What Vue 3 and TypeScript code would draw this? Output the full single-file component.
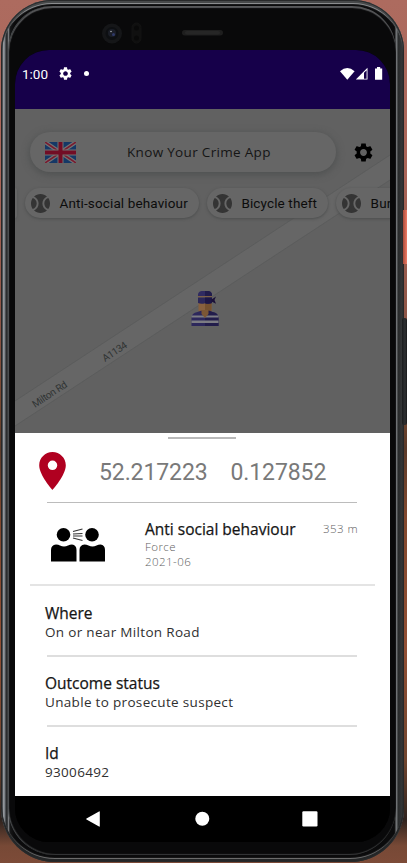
<script setup lang="ts">
interface Detail {
  title: string
  value: string
}

const chips: string[] = ['Anti-social behaviour', 'Bicycle theft', 'Burglary']
const details: Detail[] = [
  { title: 'Where', value: 'On or near Milton Road' },
  { title: 'Outcome status', value: 'Unable to prosecute suspect' },
  { title: 'Id', value: '93006492' },
]
const gearPath =
  'M19.14 12.94c.04-.3.06-.61.06-.94 0-.32-.02-.64-.07-.94l2.03-1.58c.18-.14.23-.41.12-.61l-1.92-3.32c-.12-.22-.37-.29-.59-.22l-2.39.96c-.5-.38-1.03-.7-1.62-.94l-.36-2.54c-.04-.24-.24-.41-.48-.41h-3.84c-.24 0-.43.17-.47.41l-.36 2.54c-.59.24-1.13.57-1.62.94l-2.39-.96c-.22-.08-.47 0-.59.22L2.74 8.87c-.12.21-.08.47.12.61l2.03 1.58c-.05.3-.09.63-.09.94s.02.64.07.94l-2.03 1.58c-.18.14-.23.41-.12.61l1.92 3.32c.12.22.37.29.59.22l2.39-.96c.5.38 1.03.7 1.62.94l.36 2.54c.05.24.24.41.48.41h3.84c.24 0 .44-.17.47-.41l.36-2.54c.59-.24 1.13-.56 1.62-.94l2.39.96c.22.08.47 0 .59-.22l1.92-3.32c.12-.22.07-.47-.12-.61l-2.01-1.58zM12 15.6c-1.98 0-3.6-1.62-3.6-3.6s1.62-3.6 3.6-3.6 3.6 1.62 3.6 3.6-1.62 3.6-3.6 3.6z'
const ballPath =
  'M3.81 6.28C2.67 7.9 2 9.87 2 12s.67 4.1 1.81 5.72C6.23 16.95 8 14.68 8 12S6.23 7.05 3.81 6.28zM20.19 6.28C17.77 7.05 16 9.32 16 12s1.77 4.95 4.19 5.72C21.33 16.1 22 14.13 22 12s-.67-4.1-1.81-5.72zM14 12c0-3.28 1.97-6.09 4.79-7.33C17.01 3.02 14.63 2 12 2S6.99 3.02 5.21 4.67C8.03 5.91 10 8.72 10 12s-1.97 6.09-4.79 7.33C6.99 20.98 9.37 22 12 22s5.01-1.02 6.79-2.67C15.97 18.09 14 15.28 14 12z'
</script>

<template>
  <div class="desktop">
    <span class="side-key power"></span>
    <span class="side-key volume"></span>
    <div class="phone">
      <div class="bezel">
        <svg class="hardware" viewBox="0 0 407 50" width="407" height="50">
          <circle cx="112" cy="33.500" r="10" fill="#151618" />
          <circle cx="112" cy="33.500" r="6.500" fill="#0d0f12" />
          <circle cx="112" cy="33" r="4" fill="#1b1e27" />
          <circle cx="113.500" cy="34.500" r="1.500" fill="#303a68" />
          <circle cx="111" cy="31.500" r=".8" fill="#a5a9b0" />
          <rect x="132" y="23" width="9" height="20" rx="4.500" fill="#101010" stroke="#131313" />
          <circle cx="136.500" cy="28" r="2.500" fill="#090909" />
          <circle cx="136.500" cy="38" r="2.500" fill="#090909" />
          <rect x="182" y="30" width="41" height="5.500" rx="2.700" fill="#1e1e1e" />
          <rect x="185" y="31" width="35" height="3.500" rx="1.700" fill="#262626" />
        </svg>
      </div>

      <div class="screen">
        <header class="status">
          <span class="clock">1:00</span>
          <svg class="status-gear" viewBox="2 2 20 20"><path :d="gearPath" fill="#fff" /></svg>
          <span class="dot"></span>
          <svg class="signals" viewBox="0 0 43 14" width="43" height="14">
            <path d="M0 4.300Q7.300-2.100 14.600 4.300L7.300 12.800z" fill="#fff" />
            <path d="M27.500.8V12.500H15.800z" fill="#fff" />
            <path d="M24 5.800L26.600 3.200V11.700H24z" fill="#16004a" />
            <path d="M35 1.500h2V0h3.200v1.500h2v11.200H35z" fill="#fff" />
          </svg>
        </header>

        <section class="map">
          <svg class="canvas" viewBox="0 0 375 325" width="375" height="325">
            <path d="M0 292L375 46V71L0 317z" fill="#666" />
            <path d="M0 292L375 46M0 317L375 71" fill="none" stroke="#595b5b" stroke-width=".8" />
            <g class="road-label">
              <text x="20" y="299" transform="rotate(-33.300 20 299)" textLength="39.500">Milton Rd</text>
              <text x="90" y="253" transform="rotate(-33.300 90 253)" textLength="27.500">A1134</text>
            </g>
            <g transform="translate(176.500 182)">
              <path d="M7 9h13v10q0 3-3 4v3l-3.500 3-3.500-3v-3q-3-1-3-4z" fill="#88613e" />
              <path d="M13.500 9H20v9q0 4-3 5v3l-3.500 3z" fill="#75512f" />
              <path d="M0 35v-8q0-5 6-6l4-1.500 3.500 6 3.500-6 4 1.500q6 1 6 6v8z" fill="#2d285c" />
              <path d="M13.500 25.500l3.500-6 4 1.500q6 1 6 6v8H13.500z" fill="#221d4b" />
              <path d="M0 24.500h27v2H0zM0 29.500h27v2.500H0z" fill="#7c7c83" />
              <path d="M10 19h7v4l-3.500 4L10 23z" fill="#7c5735" />
              <path d="M6.500 5V3q1-3 4-3h6q3 0 4 3v2z" fill="#302b61" />
              <path d="M13.500 0h3q3 0 4 3v2h-7z" fill="#211c4b" />
              <path d="M6.500 5h14v1.500h-14z" fill="#7c6048" />
              <path d="M6.500 6.500h14V12q-3 1.500-7 .3-4 1.200-7-.3z" fill="#2b2759" />
              <path d="M13.500 6.500h7V12q-3 1.500-7 .3z" fill="#1d1745" />
              <path d="M20 8.500l4.500-3-1.500 3.500 1.500 3.800L20 10.500z" fill="#1b1038" />
            </g>
          </svg>

          <div class="top-row">
            <div class="search">
              <svg class="flag" viewBox="0 0 31 21" width="31" height="21">
                <rect width="31" height="21" fill="#153866" />
                <path d="M0 0L31 21M31 0L0 21" stroke="#737373" stroke-width="4" />
                <path d="M0 0L31 21M31 0L0 21" stroke="#791b2f" stroke-width="1.600" />
                <path d="M15.500 0V21M0 10.500H31" stroke="#737373" stroke-width="6" />
                <path d="M15.500 0V21M0 10.500H31" stroke="#720d25" stroke-width="4" />
              </svg>
              <span class="app-name">Know Your Crime App</span>
            </div>
            <svg class="settings" viewBox="2 2 20 20"><path :d="gearPath" fill="#000" /></svg>
          </div>

          <div class="chips">
            <span class="chip-edge"></span>
            <div v-for="chip in chips" :key="chip" class="chip">
              <svg class="ball" viewBox="2 2 20 20"><path :d="ballPath" fill="#343434" /></svg>
              <span>{{ chip }}</span>
            </div>
          </div>
        </section>

        <main class="sheet">
          <div class="handle"></div>
          <div class="location">
            <svg class="pin" viewBox="5 2 14 20">
              <path d="M12 2C8.130 2 5 5.130 5 9c0 5.250 7 13 7 13s7-7.750 7-13c0-3.870-3.130-7-7-7zm0 9.500a2.500 2.500 0 0 1 0-5 2.500 2.500 0 0 1 0 5z" fill="#b00020" />
            </svg>
            <span class="lat">52.217223</span>
            <span class="lng">0.127852</span>
          </div>
          <hr class="thin" />
          <div class="crime">
            <svg class="people" viewBox="0 0 54 34" width="54" height="34">
              <circle cx="12.500" cy="6.800" r="6.800" />
              <circle cx="41" cy="6.800" r="6.800" />
              <path d="M0 33.500V22q0-5 5-5.500 2.500 0 4 1 4 2.200 8 0 2-1 4-1 4.500.5 4.500 5.500v11.500zM28.500 33.500V22q0-5 5-5.500 2 0 4 1 4 2.200 8 0 2-1 4-1 4.500.5 4.500 5.500v11.500z" />
              <path d="M22 3.500L31.500 1M22 6l9.500-.5M22 8H31.500M22 10l9.500 2.500" fill="none" stroke="#333" stroke-width="1.200" />
            </svg>
            <div class="crime-text">
              <span class="title">Anti social behaviour</span>
              <span class="meta">Force</span>
              <span class="meta">2021-06</span>
            </div>
            <span class="distance">353 m</span>
          </div>
          <hr class="wide" />
          <div v-for="item in details" :key="item.title" class="detail">
            <span class="detail-title">{{ item.title }}</span>
            <span class="detail-value">{{ item.value }}</span>
          </div>
        </main>

        <nav class="nav">
          <svg viewBox="0 0 375 46" width="375" height="46" fill="#fff">
            <path d="M84 15.500q.8-.5.800.5v14q0 1-.8.500L71.500 23.500q-.8-.5 0-1z" />
            <circle cx="187.300" cy="22.800" r="7" />
            <rect x="287.300" y="15.300" width="15.200" height="15.200" rx="1.200" />
          </svg>
        </nav>
      </div>
    </div>
  </div>
</template>

<style>
body {
  margin: 0;
  overflow: hidden;
}
</style>

<style scoped>
.desktop {
  position: relative;
  box-sizing: border-box;
  width: 407px;
  height: 863px;
  overflow: hidden;
  background: linear-gradient(180deg, #ad6b5f 0%, #aa6558 20%, #8b5445 38%, #76472f 47%, #5b3b2a 52%, #81482e 60%, #914f34 75%, #70452f 88%, #30241f 95%, #774936 98%, #7d4b38 100%);
}
.side-key {
  position: absolute;
  z-index: 2;
  right: 0;
}
.power {
  top: 210px;
  width: 4px;
  height: 54px;
  background: linear-gradient(90deg, #a94d3c, #ef7c66);
}
.volume {
  top: 318px;
  width: 5px;
  height: 107px;
  border-radius: 2px;
  background: linear-gradient(90deg, #1a1c1d, #2e3032 60%, #17191a);
}
.phone {
  display: flex;
  box-sizing: border-box;
  width: 403px;
  height: 862px;
  margin-left: 1px;
  padding: 50px 14px 20px 14px;
  border-radius: 51px 51px 54px 54px;
  background: linear-gradient(90deg, #343638 0, #2b2d2f 1px, #92969b 2.500px, #777b80 4px, #232527 5px, #3a3c3e 6.500px, #77797c 7.500px, #161718 9px, #0b0b0c 13px, #0b0b0c 393px, #161616 394px, #74777a 395px, #696c6e 396px, #292b2c 397px, #343637 401px, #202122 403px);
  box-shadow: inset 0 0 0 1px #28292a, inset 0 2px 0 1px #47494a, inset 0 4px 1px #9a9c9e, inset 0 -2px 0 1px #242627, inset 0 -4px 1px #777;
}
.bezel {
  position: absolute;
  top: 6px;
  left: 9px;
  width: 387px;
  height: 849px;
  border-radius: 44px 44px 47px 47px;
  background: #09090a;
  box-shadow: inset 0 2px 1px #57585a, inset 0 -1px 1px #38393a, -1px 0 0 #4b4e50;
}
.hardware {
  position: absolute;
  top: -6px;
  left: -9px;
}
.screen {
  position: relative;
  display: flex;
  flex-direction: column;
  width: 375px;
  height: 792px;
  overflow: hidden;
  border-radius: 34px;
  background: #000;
}
.status {
  display: flex;
  align-items: center;
  flex: none;
  box-sizing: border-box;
  height: 59px;
  padding: 0 7px 12px 7px;
  background: #16004a;
}
.clock {
  width: 29px;
  color: #fff;
  font: 13.500px/18px Roboto, sans-serif;
}
.status-gear {
  width: 13px;
  height: 13px;
  margin-left: 8px;
}
.dot {
  width: 5px;
  height: 5px;
  margin-left: 12px;
  border-radius: 50%;
  background: #fff;
}
.signals {
  margin-left: auto;
}
.map {
  position: relative;
  flex: none;
  box-sizing: border-box;
  height: 324px;
  padding-top: 23px;
  overflow: hidden;
  background: #616161;
}
.canvas {
  position: absolute;
  inset: 0;
}
.road-label {
  fill: #303434;
  font: 10px Roboto, sans-serif;
}
.top-row {
  position: relative;
  display: flex;
  align-items: center;
  padding-left: 15px;
}
.search {
  display: flex;
  align-items: center;
  box-sizing: border-box;
  width: 306px;
  height: 40px;
  padding-left: 15px;
  border-radius: 20px;
  background: #666;
  box-shadow: 0 2px 7px 1px #505252;
}
.app-name {
  margin-left: 51px;
  color: #151515;
  font: 13.500px/20px "Open Sans", "Noto Sans", sans-serif;
  letter-spacing: .32px;
  white-space: nowrap;
}
.settings {
  width: 19px;
  height: 19px;
  margin-left: 17.500px;
}
.chips {
  position: relative;
  display: flex;
  gap: 8px;
  width: 500px;
  margin-top: 16px;
}
.chip-edge {
  width: 2px;
  height: 30px;
  border-radius: 0 15px 15px 0;
  background: #666;
  box-shadow: 0 1px 3px #505252;
}
.chip {
  display: flex;
  align-items: center;
  box-sizing: border-box;
  height: 30px;
  padding: 0 11px 0 6px;
  border-radius: 15px;
  background: #666;
  box-shadow: 0 1px 3px #4c4e4e;
  color: #0c0c0c;
  font: 13.500px/20px Roboto, sans-serif;
  letter-spacing: .13px;
  white-space: nowrap;
}
.ball {
  width: 19px;
  height: 19px;
  margin-right: 9.500px;
}
.sheet {
  flex: none;
  box-sizing: border-box;
  height: 363px;
  padding-top: 4px;
  background: #fff;
}
.handle {
  width: 68px;
  height: 2px;
  margin-left: 153px;
  background: #b9b9b9;
}
.location {
  display: flex;
  align-items: center;
  height: 63px;
  padding-left: 24px;
  color: #797979;
  font: 23px/30px Roboto, sans-serif;
  letter-spacing: -.1px;
}
.pin {
  width: 27px;
  height: 38px;
  margin-top: 1px;
}
.lat {
  width: 131.500px;
  margin: 5px 0 0 33px;
}
.lng {
  margin-top: 5px;
}
hr {
  margin: 0;
  border: 0;
}
.thin {
  width: 310px;
  height: 1px;
  margin-left: 32px;
  background: #bcbcbc;
}
.crime {
  display: flex;
  align-items: flex-start;
  height: 81px;
}
.people {
  margin: 25px 0 0 36px;
}
.crime-text {
  display: flex;
  flex-direction: column;
  width: 178px;
  margin: 15px 0 0 40px;
}
.title,
.detail-title {
  height: 21px;
  color: #151515;
  font: 15.500px/22px "Open Sans", "Noto Sans", sans-serif;
  -webkit-text-stroke: .25px #151515;
}
.meta,
.distance {
  height: 15px;
  color: #606060;
  font: 300 11.500px/15px "Open Sans", "Noto Sans", sans-serif;
  letter-spacing: .45px;
}
.distance {
  margin-top: 18px;
}
.wide {
  width: 345px;
  height: 2px;
  margin-left: 15px;
  background: #e4e4e4;
}
.detail {
  display: flex;
  flex-direction: column;
  height: 70px;
  margin-left: 30px;
  box-sizing: border-box;
  padding-top: 16px;
}
.detail:not(:last-child)::after {
  content: "";
  flex: none;
  width: 310px;
  height: 2px;
  margin: 14px 0 0 2px;
  background: #dedede;
}
.detail-title,
.detail-value {
  flex: none;
}
.detail-value {
  height: 18px;
  color: #303030;
  font: 13.500px/18px "Open Sans", "Noto Sans", sans-serif;
  letter-spacing: .32px;
}
.nav {
  flex: none;
  height: 46px;
  background: #000;
}
</style>
